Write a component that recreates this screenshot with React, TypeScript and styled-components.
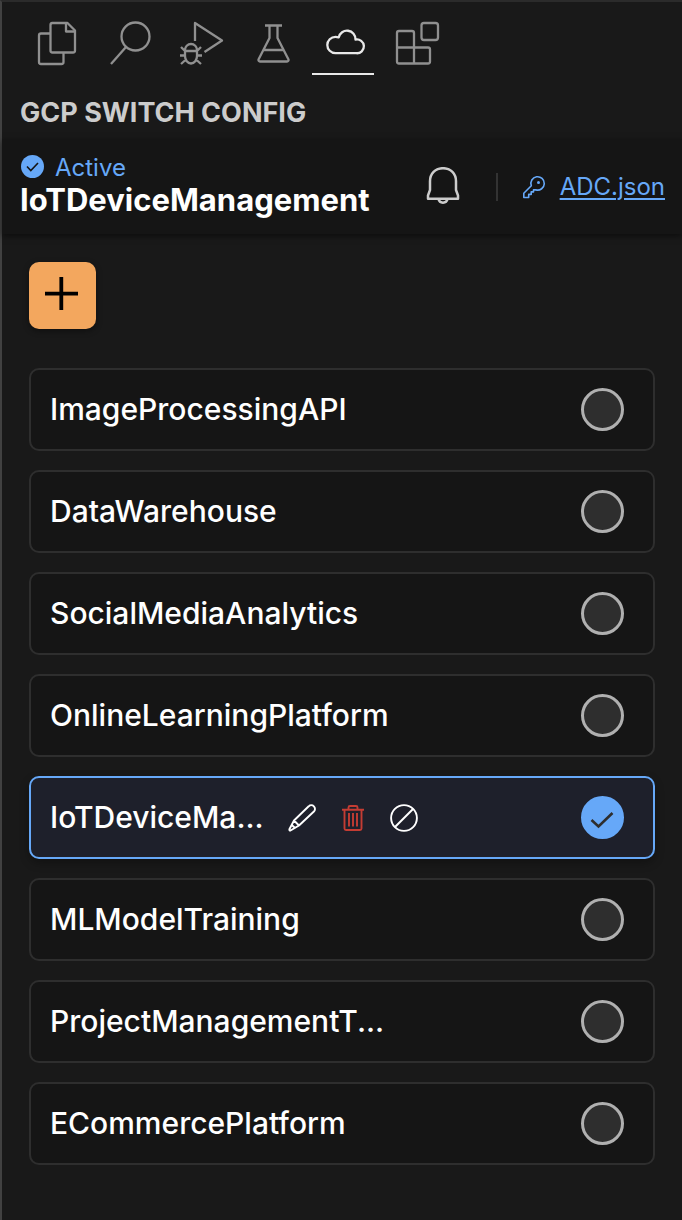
import { useState } from "react";
import type { ReactNode } from "react";
import styled, { createGlobalStyle } from "styled-components";

const GlobalStyle = createGlobalStyle`
  *, *::before, *::after { box-sizing: border-box; }
  body {
    margin: 0;
    background: #191919;
    color: #ffffff;
    font-family: Inter, "Liberation Sans", sans-serif;
  }
  button { border: 0; padding: 0; background: none; color: inherit; font: inherit; cursor: pointer; }
  svg { display: block; }
`;

const Sidebar = styled.div`
  min-height: 100vh;
  border-top: 2px solid #2b2b2b;
  border-left: 2px solid #414141;
`;

const ActivityBar = styled.nav`
  display: flex;
  gap: 10px;
  padding-left: 22px;
`;

const ActivityTab = styled.button<{ $active: boolean }>`
  width: 62px;
  height: 73px;
  color: ${(p) => (p.$active ? "#e8e8e8" : "#909090")};
  border-bottom: 2px solid ${(p) => (p.$active ? "#e8e8e8" : "transparent")};
`;

const TabIcon = styled.svg`
  width: 62px;
  height: 71px;
  fill: none;
  stroke: currentColor;
  stroke-width: 2.3;
  stroke-linejoin: round;
`;

const PanelTitle = styled.h1`
  margin: 0;
  padding: 22px 18px 10px;
  color: #cccccc;
  font-size: 27px;
  line-height: 32px;
  font-weight: 700;
`;

const ActiveHeader = styled.header`
  display: flex;
  align-items: center;
  height: 95px;
  padding: 0 17px 0 18px;
  background: #151515;
  box-shadow: 0 2px 6px rgba(0, 0, 0, 0.5);
`;

const ActiveInfo = styled.div`
  flex: 1;
  min-width: 0;
  padding-bottom: 5px;
`;

const ActiveStatus = styled.div`
  display: flex;
  align-items: center;
  gap: 11px;
  color: #66a8f8;
  font-size: 24px;
  line-height: 32px;
`;

const ActiveName = styled.div`
  font-size: 31px;
  line-height: 32px;
  font-weight: 700;
`;

const BellButton = styled.button`
  width: 34px;
  height: 40px;
  color: #cccccc;
`;

const Divider = styled.span`
  width: 2px;
  height: 28px;
  margin: 0 24px 0 36px;
  background: #333333;
`;

const CredentialLink = styled.a`
  display: flex;
  align-items: center;
  gap: 14px;
  color: #66a8f8;
  font-size: 24px;
  line-height: 32px;
  text-decoration: none;

  span {
    text-decoration: underline;
    text-decoration-thickness: 2px;
    text-underline-offset: 3px;
  }
`;

const Content = styled.main`
  padding: 28px 27px;
`;

const AddButton = styled.button`
  display: block;
  width: 67px;
  height: 67px;
  border-radius: 10px;
  background: #f3a75e;
  color: #000000;
  box-shadow: 0 2px 6px rgba(0, 0, 0, 0.4);
`;

const ConfigList = styled.ul`
  display: flex;
  flex-direction: column;
  gap: 19px;
  margin: 39px 0 0;
  padding: 0;
  list-style: none;
`;

const ConfigRow = styled.li<{ $active: boolean }>`
  display: flex;
  align-items: center;
  height: 83px;
  padding: 0 29px 0 19px;
  border: 2px solid ${(p) => (p.$active ? "#66a8f8" : "#2e2e2e")};
  border-radius: 10px;
  background: ${(p) => (p.$active ? "#1e202b" : "#151515")};
  box-shadow: ${(p) => (p.$active ? "0 4px 10px rgba(0, 0, 0, 0.3)" : "none")};
`;

const ConfigName = styled.label`
  padding-bottom: 2px;
  font-size: 30px;
  line-height: 40px;
  font-weight: 500;
  white-space: nowrap;
  cursor: pointer;
`;

const RowActions = styled.div`
  display: flex;
  gap: 23px;
  margin-left: 24px;
`;

const IconButton = styled.button<{ $danger?: boolean }>`
  width: 28px;
  height: 28px;
  color: ${(p) => (p.$danger ? "#c43c33" : "#ffffff")};
`;

const RadioWrap = styled.span`
  position: relative;
  display: flex;
  margin-left: auto;
`;

const Radio = styled.input`
  appearance: none;
  width: 43px;
  height: 43px;
  margin: 0;
  border: 3px solid #b0b0b0;
  border-radius: 50%;
  background: #2e2e2e;
  cursor: pointer;

  &:checked {
    border-color: #66a8f8;
    background: #66a8f8;
  }
`;

const RadioMark = styled.svg`
  position: absolute;
  inset: 0;
  pointer-events: none;
`;

const tabs: { label: string; icon: ReactNode }[] = [
  {
    label: "Explorer",
    icon: (
      <>
        <path d="M28 21h15.500l7.500 7.500v20a2 2 0 0 1-2 2H28.500a2 2 0 0 1-2-2V23a2 2 0 0 1 2-2z" />
        <path d="M42 21v8.500h9M26 31.500H17a2 2 0 0 0-2 2V60a2 2 0 0 0 2 2h20.500a2 2 0 0 0 2-2v-9" />
      </>
    ),
  },
  {
    label: "Search",
    icon: (
      <>
        <circle cx="39.500" cy="34.500" r="14" />
        <path d="M30 45L15 62" />
      </>
    ),
  },
  {
    label: "Run and Debug",
    icon: (
      <>
        <path d="M27 39V21l27 17.500L36.500 50" />
        <path d="M17 49h12M23 42a6 6 0 0 1 6 6v6a6 7.500 0 0 1-12 0v-6a6 6 0 0 1 6-6zM12 53.500h5M29 53.500h5M13 45l4 4M33 45l-4 4M13 62l5-4.500M33 62l-5-4.500" />
      </>
    ),
  },
  {
    label: "Testing",
    icon: (
      <path d="M25 23.500h17M29.500 23.500V36L18.500 57.500a1.500 1.500 0 0 0 1.500 2h27a1.500 1.500 0 0 0 1.500-2L37.500 36V23.500M23.500 48h20" />
    ),
  },
  {
    label: "GCP Switch Config",
    icon: (
      <path d="M23.500 51.200a8.200 8.200 0 0 1 0-16.400q1.500 0 3.200.6a8.500 8.500 0 0 1 16.800 2.200a6.900 6.900 0 1 1 .8 13.600z" />
    ),
  },
  {
    label: "Extensions",
    icon: (
      <>
        <path d="M15 29h13a2 2 0 0 1 2 2v14.500h14a2 2 0 0 1 2 2V59.500a2 2 0 0 1-2 2H15a2 2 0 0 1-2-2V31a2 2 0 0 1 2-2zM13 45.500h17v16" />
        <rect x="37.500" y="21" width="16.500" height="17" rx="2.500" />
      </>
    ),
  },
];

const configs = [
  "ImageProcessingAPI",
  "DataWarehouse",
  "SocialMediaAnalytics",
  "OnlineLearningPlatform",
  "IoTDeviceMa...",
  "MLModelTraining",
  "ProjectManagementT...",
  "ECommercePlatform",
];

const stroke = { fill: "none", stroke: "currentColor", strokeLinejoin: "round" as const };

const CheckBadge = () => (
  <svg width="24" height="26" viewBox="0 0 24 26" aria-hidden="true">
    <circle cx="12.500" cy="11.500" r="11.500" fill="#66a8f8" />
    <path d="M7 11.500l3.800 4L18 8" fill="none" stroke="#151515" strokeWidth="1.600" />
  </svg>
);

const BellIcon = () => (
  <svg width="34" height="40" viewBox="0 1 34 40" {...stroke} strokeWidth="2.500" aria-hidden="true">
    <path d="M17 2.200c7.800 0 13 5.500 13 13V24l2 5.500v3.300H2v-3.300l2-5.500v-8.800c0-7.500 5.200-13 13-13z" />
    <path d="M12.500 33a4.600 4.600 0 0 0 9 0" />
  </svg>
);

const KeyIcon = () => (
  <svg width="24" height="24" viewBox="0 0 24 24" {...stroke} strokeWidth="1.600" aria-hidden="true">
    <path d="M1.800 22.500v-4.300l7.500-7.500A6.700 6.700 0 1 1 14 14.900h-2.500v2h-2.300v2.500H6.700v3.100z" />
    <circle cx="16.500" cy="7.500" r="1.500" fill="currentColor" stroke="none" />
  </svg>
);

const PencilIcon = () => (
  <svg width="28" height="28" viewBox="0 0 28 28" {...stroke} strokeWidth="1.900" aria-hidden="true">
    <path d="M20.700 2.300a3.600 3.600 0 0 1 5.200 5.200L11 21.500 2.500 26.500a.9.9 0 0 1-1.100-1.200L6 16.500zM6 16.500l5 5M3.800 21l3.200 3" />
  </svg>
);

const TrashIcon = () => (
  <svg width="28" height="28" viewBox="0 0 28 28" {...stroke} strokeWidth="1.900" aria-hidden="true">
    <path d="M3 5.800h22M9.500 5.500V3.500a1.500 1.500 0 0 1 1.500-1.500h6a1.500 1.500 0 0 1 1.500 1.500v2M5.500 6v18.500a1.500 1.500 0 0 0 1.500 1.500h14a1.500 1.500 0 0 0 1.500-1.500V6M10 9v13.500M14 9v13.500M18 9v13.500" />
  </svg>
);

const DisableIcon = () => (
  <svg width="28" height="28" viewBox="0 0 28 28" {...stroke} strokeWidth="1.900" aria-hidden="true">
    <circle cx="14" cy="14" r="12.900" />
    <path d="M5 23L23 5" />
  </svg>
);

export default function App() {
  const [selected, setSelected] = useState(4);

  return (
    <>
      <GlobalStyle />
      <Sidebar>
        <ActivityBar>
          {tabs.map((tab, i) => (
            <ActivityTab key={tab.label} $active={i === 4} aria-label={tab.label}>
              <TabIcon viewBox="0 0 62 71" aria-hidden="true">
                {tab.icon}
              </TabIcon>
            </ActivityTab>
          ))}
        </ActivityBar>
        <PanelTitle>GCP SWITCH CONFIG</PanelTitle>
        <ActiveHeader>
          <ActiveInfo>
            <ActiveStatus>
              <CheckBadge />
              Active
            </ActiveStatus>
            <ActiveName>IoTDeviceManagement</ActiveName>
          </ActiveInfo>
          <BellButton aria-label="Notifications">
            <BellIcon />
          </BellButton>
          <Divider />
          <CredentialLink href="#adc">
            <KeyIcon />
            <span>ADC.json</span>
          </CredentialLink>
        </ActiveHeader>
        <Content>
          <AddButton aria-label="Add configuration">
            <svg width="67" height="67" viewBox="0 0 67 67" aria-hidden="true">
              <path d="M16 31.700h33M32.300 15v33" stroke="currentColor" strokeWidth="3.800" />
            </svg>
          </AddButton>
          <ConfigList>
            {configs.map((name, i) => (
              <ConfigRow key={name} $active={i === selected}>
                <ConfigName htmlFor={`config-${i}`}>{name}</ConfigName>
                {i === selected && (
                  <RowActions>
                    <IconButton aria-label="Edit">
                      <PencilIcon />
                    </IconButton>
                    <IconButton aria-label="Delete" $danger>
                      <TrashIcon />
                    </IconButton>
                    <IconButton aria-label="Deactivate">
                      <DisableIcon />
                    </IconButton>
                  </RowActions>
                )}
                <RadioWrap>
                  <Radio
                    type="radio"
                    name="config"
                    id={`config-${i}`}
                    checked={i === selected}
                    onChange={() => setSelected(i)}
                  />
                  {i === selected && (
                    <RadioMark width="43" height="43" viewBox="0 0 43 43" aria-hidden="true">
                      <path
                        d="M10.500 24l7 6.500L31.500 17"
                        fill="none"
                        stroke="#2e2e2e"
                        strokeWidth="2.600"
                      />
                    </RadioMark>
                  )}
                </RadioWrap>
              </ConfigRow>
            ))}
          </ConfigList>
        </Content>
      </Sidebar>
    </>
  );
}
